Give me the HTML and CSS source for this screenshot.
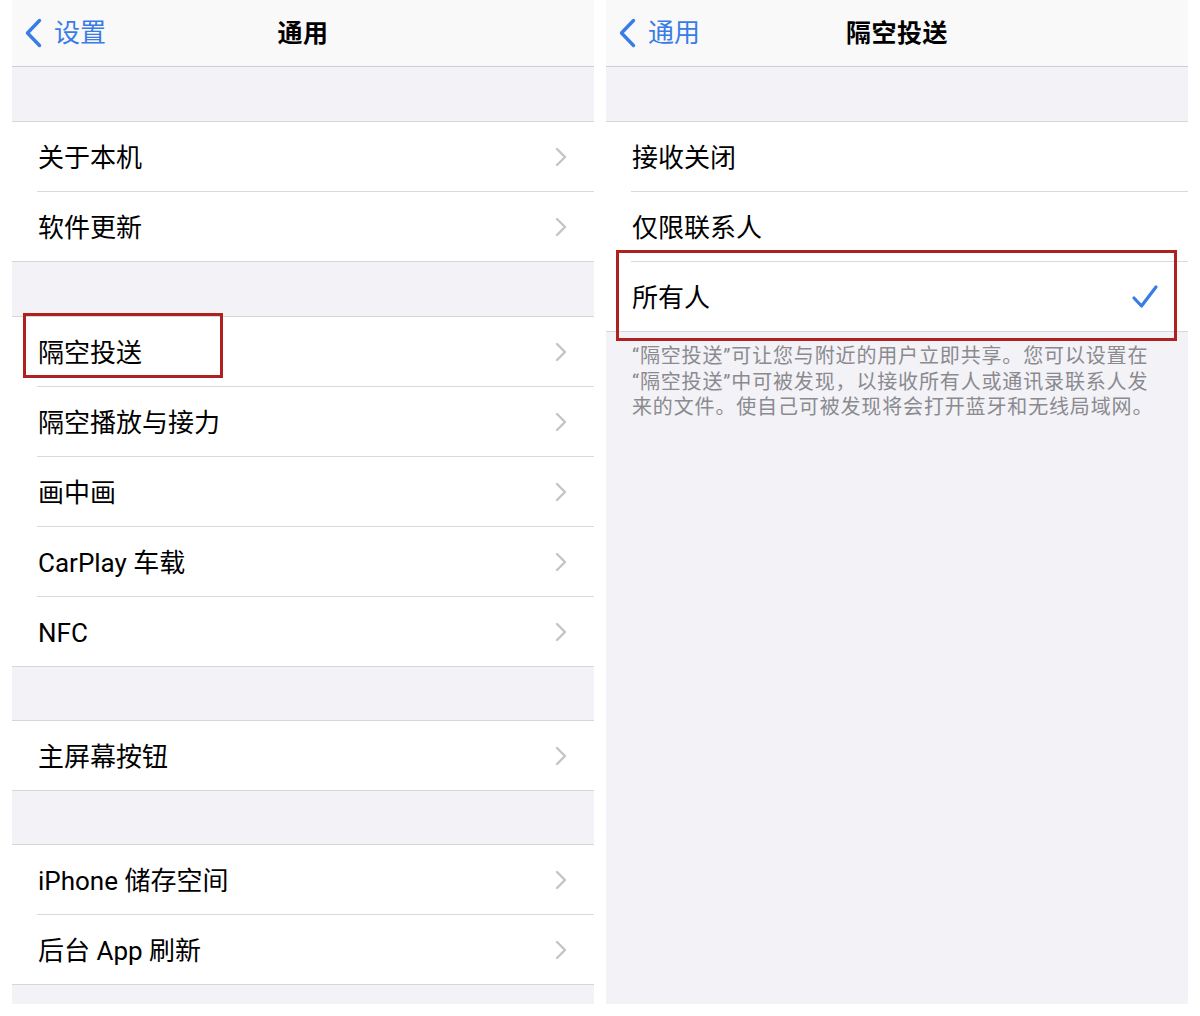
FILE: index.html
```html
<!DOCTYPE html>
<html lang="zh-CN">
<head>
<meta charset="utf-8">
<title>通用 / 隔空投送</title>
<link rel="stylesheet" href="styles.css">
</head>
<body>
<div class="screens">
  <section class="panel">
    <header class="nav">
      <div class="back">
        <svg class="back-chev" width="20" height="30" viewBox="0 0 20 30"><path d="M16.5 2.5 L4.5 15 L16.5 27.5" fill="none" stroke="#3a7ce6" stroke-width="3.4" stroke-linecap="round" stroke-linejoin="round"/></svg>
        <span>设置</span>
      </div>
      <div class="title">通用</div>
      <div></div>
    </header>
    <div class="spacer"></div>
    <div class="group">
      <div class="row"><div class="row-body"><span>关于本机</span><svg class="chev" width="12" height="20" viewBox="0 0 12 20"><path d="M2 2 L10 10 L2 18" fill="none" stroke="#c4c4c8" stroke-width="2.4" stroke-linecap="round" stroke-linejoin="round"/></svg></div></div>
      <div class="row"><div class="row-body"><span>软件更新</span><svg class="chev" width="12" height="20" viewBox="0 0 12 20"><path d="M2 2 L10 10 L2 18" fill="none" stroke="#c4c4c8" stroke-width="2.4" stroke-linecap="round" stroke-linejoin="round"/></svg></div></div>
    </div>
    <div class="spacer"></div>
    <div class="group">
      <div class="row"><div class="row-body"><span>隔空投送</span><svg class="chev" width="12" height="20" viewBox="0 0 12 20"><path d="M2 2 L10 10 L2 18" fill="none" stroke="#c4c4c8" stroke-width="2.4" stroke-linecap="round" stroke-linejoin="round"/></svg></div></div>
      <div class="row"><div class="row-body"><span>隔空播放与接力</span><svg class="chev" width="12" height="20" viewBox="0 0 12 20"><path d="M2 2 L10 10 L2 18" fill="none" stroke="#c4c4c8" stroke-width="2.4" stroke-linecap="round" stroke-linejoin="round"/></svg></div></div>
      <div class="row"><div class="row-body"><span>画中画</span><svg class="chev" width="12" height="20" viewBox="0 0 12 20"><path d="M2 2 L10 10 L2 18" fill="none" stroke="#c4c4c8" stroke-width="2.4" stroke-linecap="round" stroke-linejoin="round"/></svg></div></div>
      <div class="row"><div class="row-body"><span>CarPlay 车载</span><svg class="chev" width="12" height="20" viewBox="0 0 12 20"><path d="M2 2 L10 10 L2 18" fill="none" stroke="#c4c4c8" stroke-width="2.4" stroke-linecap="round" stroke-linejoin="round"/></svg></div></div>
      <div class="row"><div class="row-body"><span>NFC</span><svg class="chev" width="12" height="20" viewBox="0 0 12 20"><path d="M2 2 L10 10 L2 18" fill="none" stroke="#c4c4c8" stroke-width="2.4" stroke-linecap="round" stroke-linejoin="round"/></svg></div></div>
    </div>
    <div class="spacer spacer-sm"></div>
    <div class="group">
      <div class="row"><div class="row-body"><span>主屏幕按钮</span><svg class="chev" width="12" height="20" viewBox="0 0 12 20"><path d="M2 2 L10 10 L2 18" fill="none" stroke="#c4c4c8" stroke-width="2.4" stroke-linecap="round" stroke-linejoin="round"/></svg></div></div>
    </div>
    <div class="spacer spacer-sm"></div>
    <div class="group">
      <div class="row"><div class="row-body"><span>iPhone 储存空间</span><svg class="chev" width="12" height="20" viewBox="0 0 12 20"><path d="M2 2 L10 10 L2 18" fill="none" stroke="#c4c4c8" stroke-width="2.4" stroke-linecap="round" stroke-linejoin="round"/></svg></div></div>
      <div class="row"><div class="row-body"><span>后台 App 刷新</span><svg class="chev" width="12" height="20" viewBox="0 0 12 20"><path d="M2 2 L10 10 L2 18" fill="none" stroke="#c4c4c8" stroke-width="2.4" stroke-linecap="round" stroke-linejoin="round"/></svg></div></div>
    </div>
    <div class="mark mark-left"></div>
  </section>

  <section class="panel">
    <header class="nav">
      <div class="back">
        <svg class="back-chev" width="20" height="30" viewBox="0 0 20 30"><path d="M16.5 2.5 L4.5 15 L16.5 27.5" fill="none" stroke="#3a7ce6" stroke-width="3.4" stroke-linecap="round" stroke-linejoin="round"/></svg>
        <span>通用</span>
      </div>
      <div class="title">隔空投送</div>
      <div></div>
    </header>
    <div class="spacer"></div>
    <div class="group">
      <div class="row"><div class="row-body"><span>接收关闭</span></div></div>
      <div class="row"><div class="row-body"><span>仅限联系人</span></div></div>
      <div class="row"><div class="row-body"><span>所有人</span><svg class="check" width="28" height="26" viewBox="0 0 28 26"><path d="M3 14 L10.5 22 L25 3" fill="none" stroke="#3a7ce6" stroke-width="3.2" stroke-linecap="round" stroke-linejoin="round"/></svg></div></div>
    </div>
    <p class="footer">“隔空投送”可让您与附近的用户立即共享。您可以设置在<br>“隔空投送”中可被发现，以接收所有人或通讯录联系人发<br>来的文件。使自己可被发现将会打开蓝牙和无线局域网。</p>
    <div class="mark mark-right"></div>
  </section>
</div>
</body>
</html>
```

FILE: styles.css
```css
html, body {
  margin: 0;
  padding: 0;
  background: #ffffff;
}

body {
  font-family: "Roboto", "Noto Sans CJK SC", sans-serif;
  color: #000;
}

.screens {
  display: flex;
  gap: 12px;
  padding: 0 12px;
  height: 1004px;
}

.panel {
  position: relative;
  width: 582px;
  height: 1004px;
  background: #f2f2f7;
  display: flex;
  flex-direction: column;
  overflow: hidden;
}

.nav {
  height: 66px;
  flex: none;
  background: #f9f9f9;
  border-bottom: 1px solid #cfcfd3;
  display: grid;
  grid-template-columns: 1fr auto 1fr;
  align-items: center;
}

.back {
  display: flex;
  align-items: center;
  gap: 11px;
  padding-left: 11px;
  color: #3a7ce6;
  font-size: 26px;
  line-height: 1;
}

.back-chev {
  display: block;
}

.title {
  font-size: 25px;
  font-weight: 600;
  line-height: 1;
  letter-spacing: 0.5px;
}

.spacer {
  height: 54px;
  flex: none;
}

.spacer-sm {
  height: 53px;
}

.group {
  background: #ffffff;
  border-top: 1px solid #d6d6da;
  border-bottom: 1px solid #d6d6da;
  flex: none;
}

.row {
  padding-left: 25px;
}

.row-body {
  height: 69px;
  display: flex;
  align-items: center;
  justify-content: space-between;
  padding-left: 1px;
  padding-right: 27px;
  font-size: 26px;
  line-height: 1;
}

.row-body span {
  padding-top: 2px;
}

.row + .row .row-body {
  border-top: 1px solid #d9d9dd;
}

.chev {
  display: block;
}

.check {
  display: block;
  margin-right: 2px;
}

.footer {
  margin: 0;
  padding: 12px 0 0 26px;
  font-size: 20px;
  line-height: 25.5px;
  color: #8a8a8f;
  white-space: nowrap;
  letter-spacing: 0.85px;
}

.mark {
  position: absolute;
  border: 3px solid #b0201f;
  box-sizing: border-box;
}

.mark-left {
  left: 11px;
  top: 313px;
  width: 200px;
  height: 65px;
}

.mark-right {
  left: 10px;
  top: 250px;
  width: 561px;
  height: 91px;
}
```
